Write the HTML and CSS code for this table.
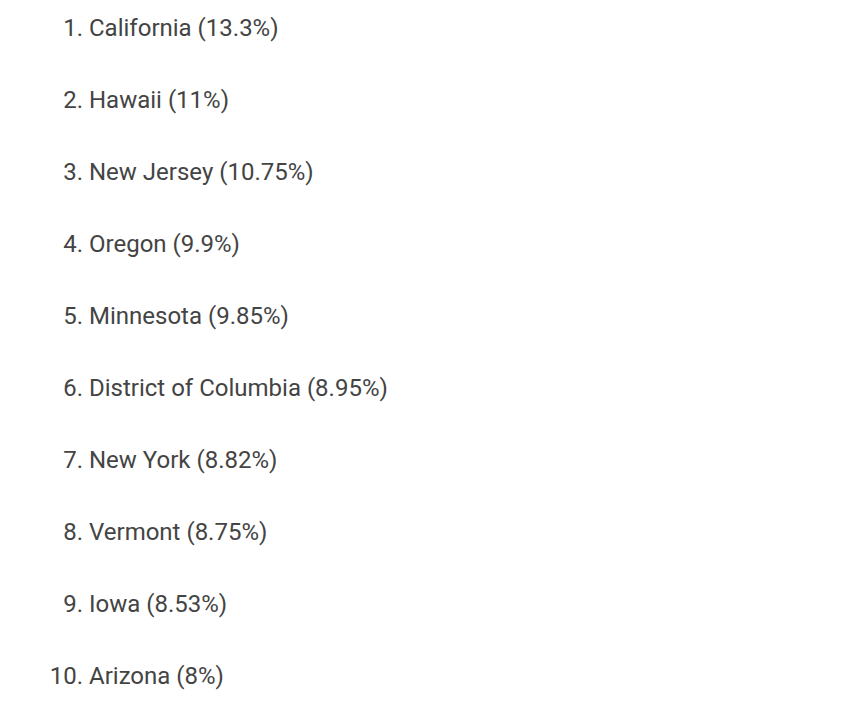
FILE: index.html
```html
<!DOCTYPE html>
<html>
<head>
<meta charset="utf-8">
<link rel="stylesheet" href="styles.css">
</head>
<body>
<ol class="states">
<li>California (13.3%)</li>
<li>Hawaii (11%)</li>
<li>New Jersey (10.75%)</li>
<li>Oregon (9.9%)</li>
<li>Minnesota (9.85%)</li>
<li>District of Columbia (8.95%)</li>
<li>New York (8.82%)</li>
<li>Vermont (8.75%)</li>
<li>Iowa (8.53%)</li>
<li>Arizona (8%)</li>
</ol>
</body>
</html>
```
FILE: styles.css
```css
html, body {
  margin: 0;
  padding: 0;
  background: #ffffff;
}
.states {
  margin: 0;
  padding: 10px 0 0 89px;
  font-family: Roboto, "Noto Sans", sans-serif;
  font-size: 24px;
  line-height: 36px;
  color: #444444;
}
.states li {
  margin-bottom: 36px;
  padding-left: 0;
}
```
